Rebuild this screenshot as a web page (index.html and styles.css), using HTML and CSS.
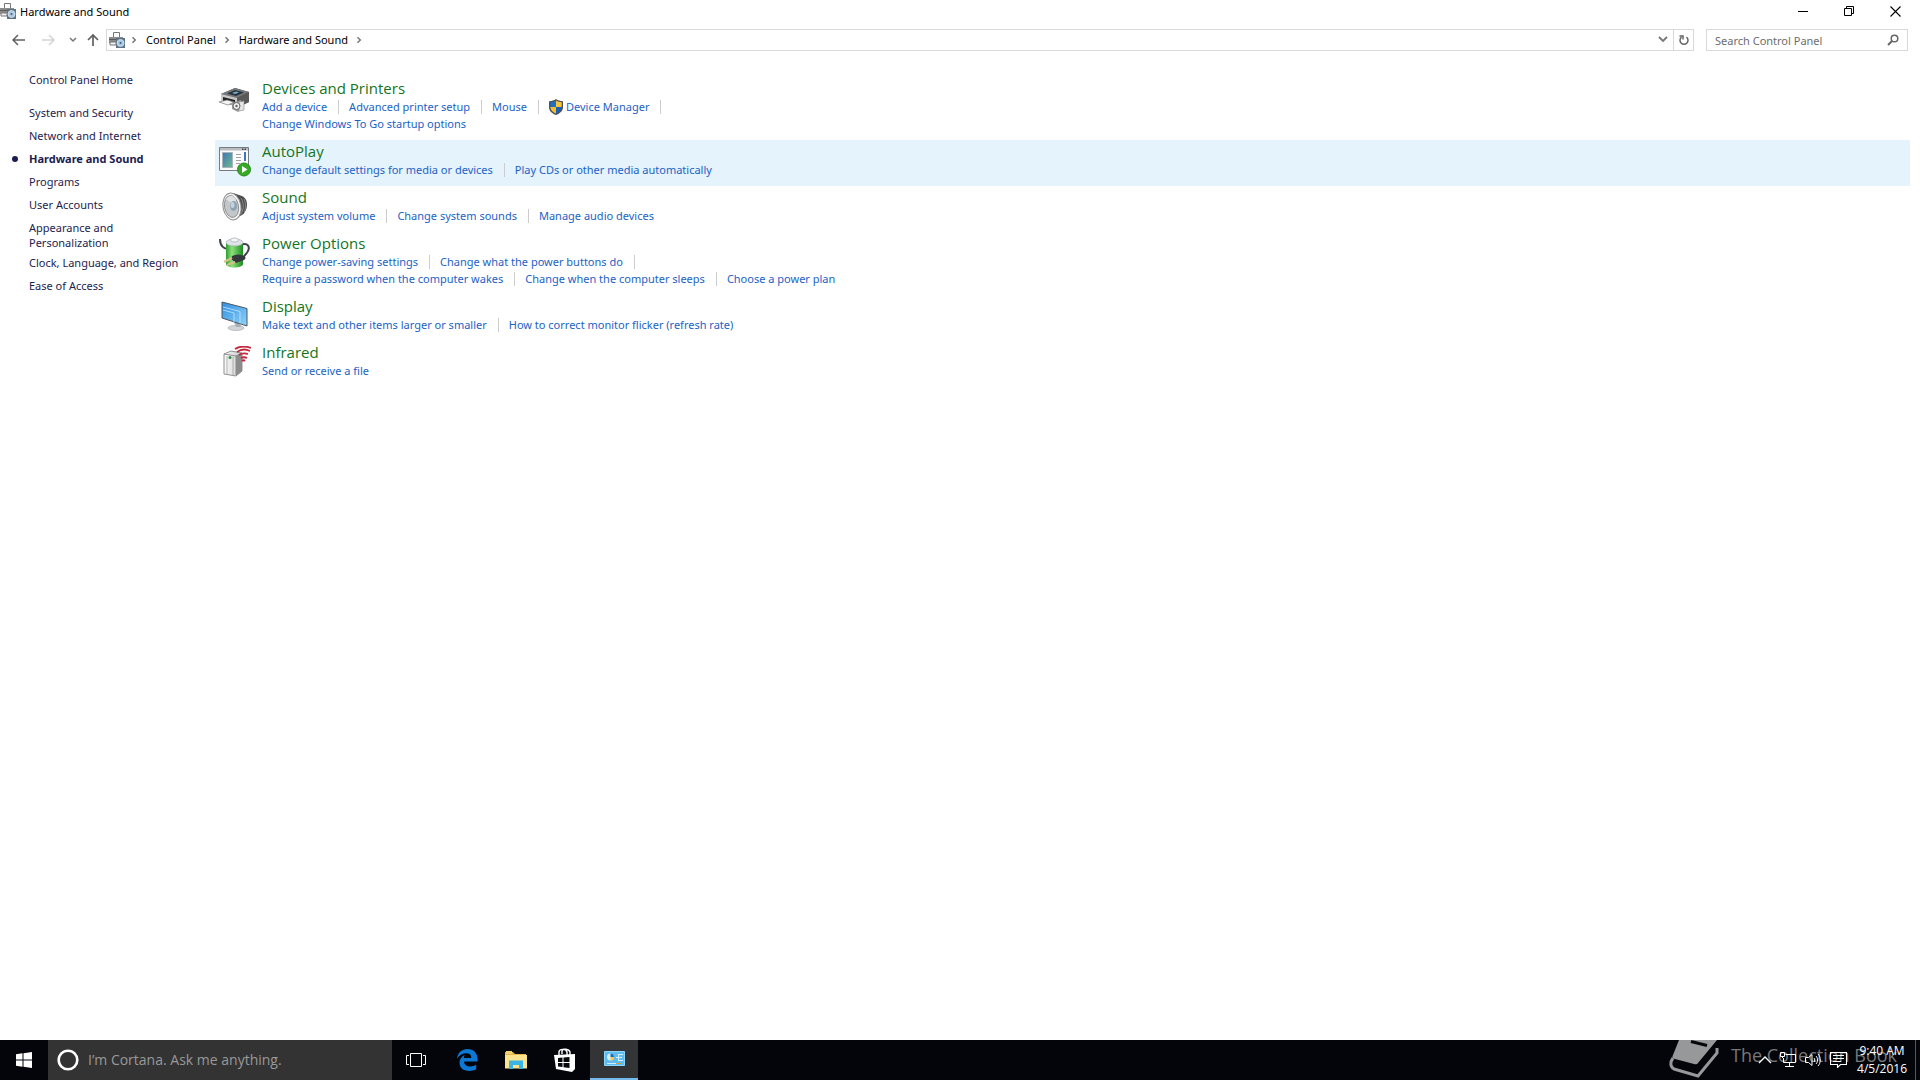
FILE: index.html
```html
<!DOCTYPE html>
<html lang="en">
<head>
<meta charset="UTF-8">
<title>Hardware and Sound</title>
<link rel="stylesheet" href="styles.css">
</head>
<body>

<svg class="defs" aria-hidden="true">
	<defs>
		<linearGradient id="g-green" x1="0" x2="1"><stop offset="0" stop-color="#2f9e2f"/><stop offset=".35" stop-color="#8be07a"/><stop offset="1" stop-color="#1d8a22"/></linearGradient>
		<linearGradient id="g-blue" x1="0" y1="0" x2="1" y2="1"><stop offset="0" stop-color="#2f8fe0"/><stop offset="1" stop-color="#8fd3fb"/></linearGradient>
		<linearGradient id="g-grey" x1="0" x2="1"><stop offset="0" stop-color="#fafafa"/><stop offset="1" stop-color="#c9c9c9"/></linearGradient>
		<linearGradient id="g-teal" x1="0" y1="0" x2="1" y2="1"><stop offset="0" stop-color="#3f78b8"/><stop offset="1" stop-color="#6fb98a"/></linearGradient>
	</defs>
	<symbol id="hardware" viewBox="0 0 16 16">
		<path d="M4.500.5h6V6h-6z" fill="#fff" stroke="#777"/>
		<path d="M0 5h14v6H0z" fill="#8b8b8b"/>
		<path d="M0 7h8v1H0z" fill="#5a5a5a"/>
		<path d="M1 10h6v3H1z" fill="#f2f2f2" stroke="#777"/>
		<path d="M7 6h9v10H7z" fill="#5b7184"/>
		<circle cx="11.500" cy="11" r="3.500" fill="#a9c9e4" stroke="#dbe6ee" stroke-width=".8"/>
		<circle cx="11.500" cy="11" r="1" fill="#3f5d78"/>
	</symbol>
	<symbol id="crumb" viewBox="0 0 6 8"><path d="M1.500 1.200 4.300 4 1.500 6.800" fill="none" stroke="#777" stroke-width="1.500"/></symbol>
</svg>

<header class="titlebar">
	<svg class="icon16"><use href="#hardware"/></svg>
	<h1>Hardware and Sound</h1>
	<div class="window-buttons">
		<button type="button" aria-label="Minimize"><svg width="11" height="11"><path d="M0 5.500h10" stroke="#000"/></svg></button>
		<button type="button" aria-label="Restore"><svg width="11" height="11" fill="none" stroke="#000"><path d="M.5 2.500h7v7h-7zM2.500 2.500v-2h7v7h-2"/></svg></button>
		<button type="button" aria-label="Close"><svg width="11" height="11"><path d="M.5.5l10 10M10.500.5l-10 10" stroke="#000" stroke-width="1.100"/></svg></button>
	</div>
</header>

<nav class="navbar">
	<button type="button" class="nav-back" aria-label="Back"><svg width="14" height="12" fill="none" stroke="#606060" stroke-width="1.500"><path d="M1 6h12M6 1 1 6l5 5"/></svg></button>
	<button type="button" class="nav-forward" aria-label="Forward"><svg width="14" height="12" fill="none" stroke="#d4d4d4" stroke-width="1.500"><path d="M0 6h12M7 1l5 5-5 5"/></svg></button>
	<button type="button" class="nav-recent" aria-label="Recent locations"><svg width="8" height="6" fill="none" stroke="#777" stroke-width="1.500"><path d="M1 1l3 3 3-3"/></svg></button>
	<button type="button" class="nav-up" aria-label="Up"><svg width="12" height="14" fill="none" stroke="#606060" stroke-width="1.700"><path d="M6 13V2M1 7l5-5 5 5"/></svg></button>
	<div class="address">
		<svg class="icon16"><use href="#hardware"/></svg>
		<svg class="crumb"><use href="#crumb"/></svg>
		<a href="#">Control Panel</a>
		<svg class="crumb"><use href="#crumb"/></svg>
		<a href="#">Hardware and Sound</a>
		<svg class="crumb"><use href="#crumb"/></svg>
		<button type="button" class="address-drop" aria-label="Previous locations"><svg width="10" height="7" fill="none" stroke="#777" stroke-width="1.800"><path d="M1 1l4 4 4-4"/></svg></button>
		<button type="button" class="address-refresh" aria-label="Refresh"><svg width="12" height="12" fill="none" stroke="#666" stroke-width="1.500"><path d="M3.500 3.200A4 4 0 1 0 8.500 3.200M1.500 2h3.500v3.500"/></svg></button>
	</div>
	<div class="search">
		<input type="search" placeholder="Search Control Panel" aria-label="Search Control Panel">
		<svg width="12" height="12" fill="none" stroke="#666" stroke-width="1.500"><circle cx="7.500" cy="4.500" r="3.300"/><path d="M5 7 1 11" stroke-width="2"/></svg>
	</div>
</nav>

<div class="page">
	<aside class="sidebar">
		<a class="home" href="#">Control Panel Home</a>
		<ul>
			<li><a href="#">System and Security</a></li>
			<li><a href="#">Network and Internet</a></li>
			<li class="current"><a href="#">Hardware and Sound</a></li>
			<li><a href="#">Programs</a></li>
			<li><a href="#">User Accounts</a></li>
			<li class="wrapped"><a href="#">Appearance and<br>Personalization</a></li>
			<li><a href="#">Clock, Language, and Region</a></li>
			<li><a href="#">Ease of Access</a></li>
		</ul>
	</aside>

	<main class="categories">
		<section class="category">
			<svg class="icon32" viewBox="0 -3 32 32">
				<path d="M2 9 16 3l14 4v10l-10 5L2 17z" fill="#4b4d50"/>
				<path d="M2 9 16 3l14 4-12 6z" fill="#77797c"/>
				<path d="M8 8.500 16 5l9 2.500L17 11z" fill="#27343d"/><path d="M13 8l4-1.500 3 1-4 1.500z" fill="#7faec6"/>
				<path d="M2 9l16 4v8L2 17z" fill="#c9c9c9"/><path d="M18 13l12-6v10l-12 5z" fill="#595959"/>
				<path d="M4 12l12 3v4L4 16z" fill="#242424"/><path d="M0 17l8-2 7 2-6 3z" fill="#f5f5f5" stroke="#777" stroke-width=".7"/>
				<path d="M13 18l9-3v10l-3 2-6-3z" fill="#9d9d9d"/><path d="M20 17l5-1v9l-5 1z" fill="#e4e4e4" stroke="#888" stroke-width=".6"/>
				<circle cx="17.500" cy="21" r="3.500" fill="#eee" stroke="#666"/><circle cx="17.500" cy="21" r="1.200" fill="#666"/>
			</svg>
			<div>
				<h2><a href="#">Devices and Printers</a></h2>
				<ul class="links"><li><a href="#">Add a device</a></li><li><a href="#">Advanced printer setup</a></li><li><a href="#">Mouse</a></li><li class="admin"><svg class="shield" viewBox="0 0 14 16"><path d="M7 0C5 1.500 3 2 0 2.200V8c0 4 3 6.500 7 8 4-1.500 7-4 7-8V2.200C11 2 9 1.500 7 0z" fill="#4c5257"/><path d="M7 1.600V8H1.300V3.300C3.600 3.100 5.200 2.700 7 1.600z" fill="#1f6fc4"/><path d="M7 1.600V8h5.700V3.300C10.400 3.100 8.800 2.700 7 1.600z" fill="#f8c43c"/><path d="M1.300 8H7v6.500C4 13.200 1.500 11.300 1.300 8z" fill="#f4bd31"/><path d="M12.700 8H7v6.500c3-1.300 5.500-3.200 5.700-6.500z" fill="#1b5fae"/></svg><a href="#">Device Manager</a></li></ul>
				<ul class="links last"><li><a href="#">Change Windows To Go startup options</a></li></ul>
			</div>
		</section>

		<section class="category selected">
			<svg class="icon32" viewBox="0 0 32 32">
				<path d="M.5 2.500h29v23H.5z" fill="#fbfbfb" stroke="#777b80"/>
				<path d="M1 3h28v2.500H1z" fill="#b9bdc2"/><path d="M23 3.500h1.500V5H23zM25.500 3.500H27V5h-1.500z" fill="#444"/>
				<path d="M3.500 7.500h10v15h-10z" fill="url(#g-teal)" stroke="#a9b4bd"/>
				<path d="M17 9.500h5M17 12.500h5M17 15.500h5M17 18.500h4" stroke="#a3a3a3"/>
				<path d="M25 7h2v9h-2z" fill="#3f78b8"/>
				<circle cx="25" cy="24.500" r="6.500" fill="#35ab25" stroke="#278a1b"/><path d="M23 21v7l5.500-3.500z" fill="#fff"/>
			</svg>
			<div>
				<h2><a href="#">AutoPlay</a></h2>
				<ul class="links last"><li><a href="#">Change default settings for media or devices</a></li><li><a href="#">Play CDs or other media automatically</a></li></ul>
			</div>
		</section>

		<section class="category">
			<svg class="icon32" viewBox="0 0 32 32">
				<path d="M14 2l9 3c4 2 5 5 5 9s-2 8-5 10l-8 4z" fill="#4d4d4d"/>
				<path d="M22 7c3 5 3 11 0 16M25 8c2 4 2 10 0 13" stroke="#8a8a8a" fill="none"/>
				<ellipse cx="13" cy="15.500" rx="9" ry="13.500" fill="#f1f1f1" stroke="#8d8d8d" transform="rotate(-10 13 15.500)"/>
				<ellipse cx="12.500" cy="15.500" rx="7" ry="11" fill="#c3c7ca" stroke="#777" stroke-width=".7" transform="rotate(-10 12.500 15.500)"/>
				<path d="M7 8c3-4 7-4 10 0l-2 6z" fill="#dfe2e4"/>
				<ellipse cx="14.500" cy="15" rx="3.500" ry="5" fill="#8da2b0"/><ellipse cx="13.500" cy="14" rx="2" ry="3" fill="#c3d2dc"/>
			</svg>
			<div>
				<h2><a href="#">Sound</a></h2>
				<ul class="links last"><li><a href="#">Adjust system volume</a></li><li><a href="#">Change system sounds</a></li><li><a href="#">Manage audio devices</a></li></ul>
			</div>
		</section>

		<section class="category">
			<svg class="icon32" viewBox="0 0 32 32">
				<path d="M1 2c0 7 4 10 8 10M22 8c7-3 9 2 7 6-1 3-4 4-5 7" stroke="#3f4248" stroke-width="2" fill="none"/>
				<path d="M7 6v21c0 2 4 3.500 8.500 3.500S24 29 24 27V6z" fill="url(#g-green)"/>
				<ellipse cx="15.500" cy="5.500" rx="8.500" ry="3.500" fill="#dfe4e8" stroke="#a4abb0" stroke-width=".7"/>
				<ellipse cx="15.500" cy="3" rx="4" ry="2" fill="#f4f6f8" stroke="#a4abb0" stroke-width=".7"/>
				<path d="M13 19c4-2 8-2 12 0 2 1 2 3 0 4l-8 3-5-4z" fill="#35383d"/>
				<path d="M13 21 5 25M16 25l-8 3" stroke="#d8c08a" stroke-width="2"/>
			</svg>
			<div>
				<h2><a href="#">Power Options</a></h2>
				<ul class="links"><li><a href="#">Change power-saving settings</a></li><li><a href="#">Change what the power buttons do</a></li></ul>
				<ul class="links last"><li><a href="#">Require a password when the computer wakes</a></li><li><a href="#">Change when the computer sleeps</a></li><li><a href="#">Choose a power plan</a></li></ul>
			</div>
		</section>

		<section class="category">
			<svg class="icon32" viewBox="0 0 32 32">
				<ellipse cx="17" cy="28" rx="8" ry="2.500" fill="#d2d6d9" stroke="#9da3a8" stroke-width=".6"/>
				<path d="M15 22h6l1 5h-5z" fill="#a9b0b5"/>
				<path d="M3 2l25 6.500V26L3 18z" fill="url(#g-blue)" stroke="#4b5660"/>
				<path d="M4 7l17 4.500v12M4 10l11 3v9" fill="none" stroke="#c5e6fb" stroke-width=".8"/>
			</svg>
			<div>
				<h2><a href="#">Display</a></h2>
				<ul class="links last"><li><a href="#">Make text and other items larger or smaller</a></li><li><a href="#">How to correct monitor flicker (refresh rate)</a></li></ul>
			</div>
		</section>

		<section class="category">
			<svg class="icon32" viewBox="0 0 32 32">
				<path d="M5 8l7-3 11 2v18l-6 5-12-2z" fill="url(#g-grey)" stroke="#777" stroke-width=".8"/>
				<path d="M17 10v19M5 8l12 2 6-3" stroke="#777" fill="none" stroke-width=".8"/><path d="M17 10l6-3v18l-6 5z" fill="#8c8c8c"/>
				<path d="M8 10v18M14 11v18" stroke="#999" fill="none" stroke-width=".7"/><circle cx="11" cy="11.500" r="1.500" fill="#2f8f49"/>
				<path d="M16 3c5-3 11-3 16-1M18 6c4-3 9-3 13-1M20 9c3-2 6-2 9-1M22 12c2-1 4-1 6 0M23 15c1-1 2-1 3 0" stroke="#c2273d" stroke-width="1.800" fill="none"/>
			</svg>
			<div>
				<h2><a href="#">Infrared</a></h2>
				<ul class="links last"><li><a href="#">Send or receive a file</a></li></ul>
			</div>
		</section>
	</main>
</div>

<footer class="taskbar">
	<button type="button" class="task start" aria-label="Start"><svg width="16" height="16" fill="#fff"><path d="M0 2.200 6.500 1.300v6.200H0zM7.500 1.200 16 0v7.500H7.500zM0 8.500h6.500v6.200L0 13.800zM7.500 8.500H16V16l-8.500-1.200z"/></svg></button>
	<div class="cortana">
		<svg width="22" height="22" fill="none"><circle cx="11" cy="11" r="9.300" stroke="#fff" stroke-width="2.600"/></svg>
		<input type="text" placeholder="I’m Cortana. Ask me anything." aria-label="Ask Cortana">
	</div>
	<button type="button" class="task taskview" aria-label="Task View"><svg width="20" height="14" fill="none" stroke="#fff"><path d="M4.500.5h11v13h-11zM3 2.500H.5v9H3M17 2.500h2.500v9H17"/></svg></button>
	<button type="button" class="task" aria-label="Edge"><svg width="21" height="22" viewBox="0 0 21 22"><path d="M0 9.500C.8 3.500 5 0 10.500 0 16.500 0 20.500 4 20.500 10v2.500H7c.2 3.300 3 5 6.200 5 2.200 0 4.200-.6 6-1.700v4.500c-2 1.100-4.400 1.700-7 1.700-6 0-9.700-3.300-9.700-8.200 0-3.500 2-6.300 5.300-7.800-.6.800-.9 1.800-1 2.900h7.500c0-3-1.500-4.600-4.600-4.600C6 4.300 2.300 6 0 9.500z" fill="#0a78d4"/></svg></button>
	<button type="button" class="task" aria-label="File Explorer"><svg width="22" height="18"><path d="M0 1h8l2 2h11v14H0z" fill="#e8b84c"/><path d="M1 0h6v3H1z" fill="#f0d070"/><path d="M0 4h22v13.500H0z" fill="#fbe38d"/><path d="M4 18V9.500h14V18h-4v-4H8v4z" fill="#38b5e6"/></svg></button>
	<button type="button" class="task" aria-label="Store"><svg width="22" height="24"><path d="M5 7V4c0-3 7-4 8 0v3M8 6V3c1-3 7-2 8 1v3" fill="none" stroke="#fff" stroke-width="1.400"/><path d="M0 7l21-1v15l-3 3L2 21z" fill="#fff"/><path d="M4 10l4.500-.4V14H4zM9.500 9.500l6-.5v5h-6zM4 15h4.500v4L4 18.600zM9.500 15h6v5l-6-.8z" fill="#05070b"/></svg></button>
	<button type="button" class="task active" aria-label="Control Panel"><svg width="21" height="16"><path d="M.5.5h20v14H.5z" fill="#5ebcf0" stroke="#8fd6fb"/><circle cx="6.500" cy="6" r="3.500" fill="#d4effc"/><path d="M6.500 6V2.500A3.500 3.500 0 0 1 10 6z" fill="#1d6fb0"/><path d="M6.500 6H10a3.500 3.500 0 0 1-3.500 3.500z" fill="#f5c84b"/><path d="M12 6.500h2M15 3.500h4M15 6.500h3M15 9.500h4M14.500 3v7" stroke="#d4effc"/><path d="M3 12.500h9" stroke="#d4effc"/><path d="M12 12.500h5" stroke="#c8a24a"/></svg></button>

	<div class="watermark">
		<svg width="52" height="40"><path d="M10 0h38L29 23q-1 2-4 1L6 19q-4-1-2-4z" fill="#97989a"/><path d="M22 1.500l16 4" stroke="#05070b" stroke-width="3"/><path d="M4 18c-3 4-3 9 1 11l24 7 19-23V8" fill="none" stroke="#97989a" stroke-width="3"/></svg>
		<span>The Collection Book</span>
	</div>

	<div class="tray">
		<button type="button" aria-label="Show hidden icons"><svg width="14" height="16" fill="none" stroke="#fff" stroke-width="1.300"><path d="M1 11l6-6 6 6"/></svg></button>
		<button type="button" aria-label="Network"><svg width="17" height="16" fill="none" stroke="#fff"><path d="M5.500 2.500h10v8H3.500V6M9.500 10.500v4M5 14.500h9M.5.500h4v4h-4zM2.500 4.500V6"/></svg></button>
		<button type="button" aria-label="Volume"><svg width="17" height="16" fill="none" stroke="#fff"><path d="M.5 5.500h3l3.500-3v11l-3.500-3h-3zM9 6c1 1 1 3 0 4M11 4c2 2 2 6 0 8M13 2c3 3 3 9 0 12"/></svg></button>
		<button type="button" aria-label="Action Center"><svg width="17" height="16" fill="none" stroke="#fff"><path d="M.5.500h16v12h-6l-3 3v-3h-7zM3 3.500h11M3 6.500h11M3 9.500h8" stroke-width="1.100"/></svg></button>
		<time class="clock" datetime="2016-04-05T09:40">9:40 AM<br>4/5/2016</time>
	</div>
</footer>

</body>
</html>
```

FILE: styles.css
```css
* {
	box-sizing: border-box;
}
body {
	display: flex;
	flex-direction: column;
	min-height: 100vh;
	margin: 0;
	background: #fff;
	color: #000;
	font: 11px/15px "Noto Sans", "Open Sans", sans-serif;
}
h1, h2, ul {
	margin: 0;
	padding: 0;
	font-size: inherit;
	font-weight: normal;
	list-style: none;
}
a {
	color: inherit;
	text-decoration: none;
}
button {
	display: flex;
	align-items: center;
	justify-content: center;
	padding: 0;
	border: 0;
	background: none;
}
input {
	flex: 1;
	min-width: 0;
	padding: 0;
	border: 0;
	outline: 0;
	background: none;
	font: inherit;
	color: inherit;
}
svg {
	display: block;
	flex: none;
}
.defs {
	position: absolute;
	width: 0;
	height: 0;
}
.icon16 {
	width: 16px;
	height: 16px;
}
.icon32 {
	width: 32px;
	height: 32px;
	margin-top: 4px;
}

/* title bar */
.titlebar {
	display: flex;
	align-items: center;
	gap: 4px;
	height: 22px;
}
.window-buttons {
	display: flex;
	margin-left: auto;
	margin-right: 2px;
}
.window-buttons button {
	width: 46px;
	height: 20px;
}

/* navigation row */
.navbar {
	display: flex;
	align-items: center;
	padding: 7px 12px 0;
}
.nav-forward {
	margin-left: 16px;
}
.nav-recent {
	margin-left: 13px;
}
.nav-up {
	margin: 0 7px 0 10px;
}
.address {
	display: flex;
	flex: 1;
	align-items: center;
	height: 22px;
	padding: 0 0 1px 2px;
	border: 1px solid #d9d9d9;
}
.crumb {
	width: 6px;
	height: 8px;
	margin: 0 9px 0 6px;
}
.address a + .crumb {
	margin-left: 8px;
}
.address-drop {
	width: 20px;
	height: 20px;
	margin-left: auto;
}
.address-refresh {
	width: 20px;
	height: 20px;
	border-left: 1px solid #d9d9d9;
}
.search {
	display: flex;
	align-items: center;
	width: 202px;
	height: 22px;
	margin-left: 12px;
	padding: 0 8px;
	border: 1px solid #d9d9d9;
}
::placeholder {
	color: #6d6d6d;
	opacity: 1;
}

/* body */
.page {
	display: flex;
	flex: 1;
	padding-right: 10px;
}
.sidebar {
	width: 215px;
	padding: 21px 0 0 29px;
	color: #1c1c50;
}
.home {
	display: block;
	margin-bottom: 18px;
}
.sidebar li {
	position: relative;
	margin-bottom: 8px;
}
.sidebar .wrapped {
	margin-bottom: 5px;
}
.current {
	font-weight: bold;
}
.current::before {
	content: "";
	position: absolute;
	top: 5px;
	left: -17px;
	width: 6px;
	height: 6px;
	border-radius: 50%;
	background: #1c1c50;
}
.categories {
	flex: 1;
	padding-top: 26px;
}
.category {
	display: flex;
	gap: 11px;
	padding: 1px 0 8px 4px;
}
.selected {
	background: #e5f3fd;
}
h2 {
	color: #14751c;
	font-family: "Open Sans", "Noto Sans", sans-serif;
	font-size: 15px;
	line-height: 20px;
}
.links {
	display: flex;
	flex-wrap: wrap;
	color: #1b62c4;
	line-height: 17px;
}
.links li {
	display: flex;
	align-items: center;
}
.links li::after {
	content: "";
	height: 14px;
	margin: 0 10px 0 11px;
	border-left: 1px solid #ccc;
}
.last li:last-child::after {
	display: none;
}
.shield {
	width: 14px;
	height: 16px;
	margin-right: 3px;
}

/* taskbar */
.taskbar {
	position: relative;
	display: flex;
	gap: 1px;
	height: 40px;
	background: #03050a;
	color: #fff;
}
.task {
	width: 48px;
	height: 40px;
}
.start {
	margin-right: -1px;
}
.taskview {
	margin: 0 2px 0 -1px;
}
.active {
	border-bottom: 2px solid #76b9ed;
	background: #333436;
}
.cortana {
	display: flex;
	align-items: center;
	gap: 9px;
	width: 344px;
	padding-left: 9px;
	background: #333;
	font-family: "Open Sans", "Noto Sans", sans-serif;
	font-size: 14px;
	line-height: 20px;
}
.cortana ::placeholder {
	color: #999;
}
.watermark {
	position: absolute;
	top: 0;
	right: 23px;
	display: flex;
	gap: 10px;
	color: #77787a;
	font-family: "Open Sans", "Noto Sans", sans-serif;
	font-size: 18px;
	line-height: 30px;
}
.tray {
	position: relative;
	display: flex;
	align-items: center;
	gap: 8px;
	margin-left: auto;
	margin-right: 4px;
	padding-right: 8px;
	border-right: 1px solid #55575a;
}
.clock {
	margin-left: 2px;
	font-family: "Open Sans", "Noto Sans", sans-serif;
	font-size: 12px;
	line-height: 18px;
	text-align: center;
}
```
